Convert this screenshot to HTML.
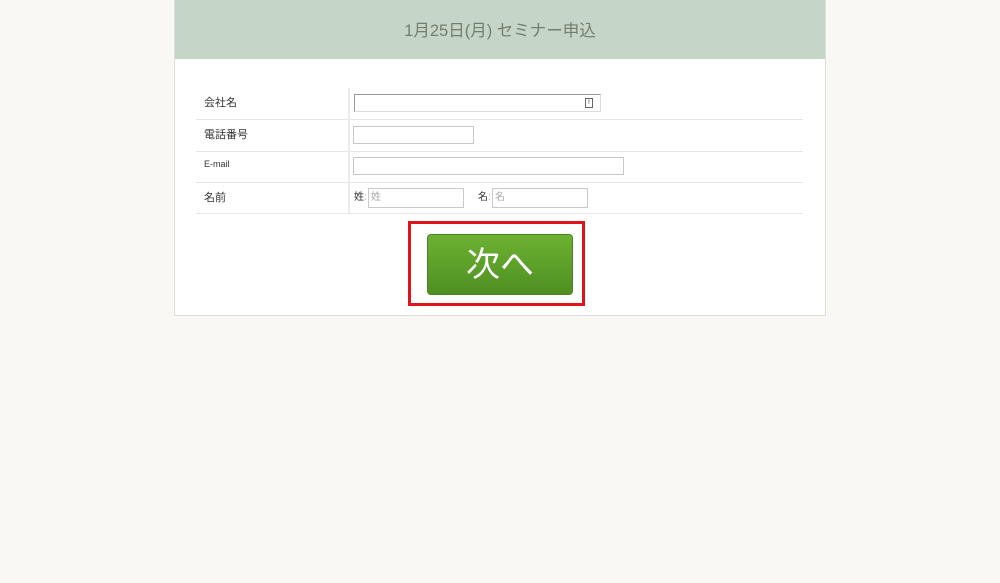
<!DOCTYPE html>
<html><head><meta charset="utf-8"><style>
body{margin:0;background:#f9f8f4;font-family:"Liberation Sans","Noto Sans CJK JP",sans-serif;}
.card{position:absolute;left:174px;top:0;width:652px;height:316px;background:#fff;border:1px solid #dedede;border-top:none;box-sizing:border-box;}
.hd{height:59px;background:#c5d5c8;text-align:center;line-height:63px;font-size:16.5px;color:#737f6e;}
.row{position:absolute;left:22px;width:607px;border-bottom:1px solid #e6e6e6;}
.lbl{position:absolute;left:8px;font-size:11px;color:#333;}
.vl{position:absolute;left:348px;top:88px;width:2px;height:125px;background:#ececec;}
.in{position:absolute;border:1px solid #c8c8c8;height:18px;box-sizing:border-box;background:#fff;}
.ph{font-size:10px;color:#aaa;padding-left:2px;line-height:18px;}
.sm{position:absolute;font-size:10px;color:#333;line-height:12px;}
.red{position:absolute;left:408px;top:221px;width:177px;height:85px;border:3px solid #e0141a;box-sizing:border-box;}
.btn{position:absolute;left:427px;top:234px;width:146px;height:61px;border-radius:4px;background:linear-gradient(#6cb232,#4f8f22);border:1px solid #4a8420;box-sizing:border-box;color:#fff;font-size:34px;text-align:center;line-height:60px;}
</style></head><body>
<div class="card"><div class="hd">1月25日(月) セミナー申込</div></div>
<div class="row" style="left:196px;top:88px;height:31px"></div>
<div class="row" style="left:196px;top:119px;height:32px"></div>
<div class="row" style="left:196px;top:151px;height:31px"></div>
<div class="row" style="left:196px;top:182px;height:31px"></div>
<div class="vl"></div>
<div class="lbl" style="left:204px;top:94px">会社名</div>
<div class="lbl" style="left:204px;top:126px">電話番号</div>
<div class="lbl" style="left:204px;top:159px;font-size:9px">E-mail</div>
<div class="lbl" style="left:204px;top:189px">名前</div>
<div class="in" style="left:354px;top:94px;width:247px;height:18px;border-color:#999 #ddd #ddd #999"><span style="position:absolute;right:7px;top:3px;width:6px;height:8px;border:1px solid #666;font-size:6px;line-height:8px;text-align:center">!</span></div>
<div class="in" style="left:353px;top:126px;width:121px"></div>
<div class="in" style="left:353px;top:157px;width:271px"></div>
<div class="sm" style="left:354px;top:192px">姓<span style="color:#aaa">:</span></div>
<div class="in ph" style="left:368px;top:188px;width:96px;height:20px">姓</div>
<div class="sm" style="left:478px;top:192px">名<span style="color:#aaa">:</span></div>
<div class="in ph" style="left:492px;top:188px;width:96px;height:20px">名</div>
<div class="red"></div>
<div class="btn">次へ</div>
</body></html>
